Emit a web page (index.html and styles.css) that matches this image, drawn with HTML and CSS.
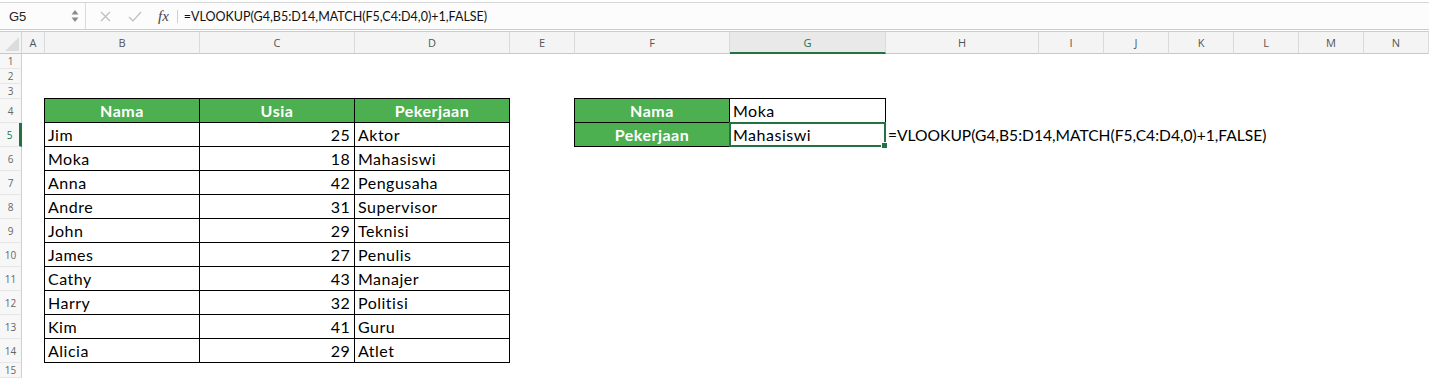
FILE: index.html
```html
<!DOCTYPE html>
<html lang="en">
<head>
    <meta charset="UTF-8">
    <title>VLOOKUP MATCH</title>
    <link rel="stylesheet" href="styles.css">
</head>
<body>
    <div class="topbar">
        <div class="name-box">
            <span>G5</span>
            <svg class="spin" width="8" height="16" viewBox="0 0 8 16">
                <path d="M4 2 L7.5 6.5 L0.5 6.5 Z" fill="#8a8a8a"/>
                <path d="M4 14 L7.5 9.5 L0.5 9.5 Z" fill="#8a8a8a"/>
            </svg>
        </div>
        <div class="fx-tools">
            <svg width="11" height="11" viewBox="0 0 11 11">
                <path d="M1 1 L10 10 M10 1 L1 10" stroke="#bdbdbd" stroke-width="1.2" fill="none"/>
            </svg>
            <svg width="14" height="11" viewBox="0 0 14 11">
                <path d="M1 6 L5 10 L13 1" stroke="#bdbdbd" stroke-width="1.2" fill="none"/>
            </svg>
            <span class="fx">fx</span>
            <span class="divider"></span>
        </div>
        <div class="formula">=VLOOKUP(G4,B5:D14,MATCH(F5,C4:D4,0)+1,FALSE)</div>
    </div>

    <div class="sheet">
        <div class="corner"></div>
        <div class="col-hd">A</div>
        <div class="col-hd">B</div>
        <div class="col-hd">C</div>
        <div class="col-hd">D</div>
        <div class="col-hd">E</div>
        <div class="col-hd">F</div>
        <div class="col-hd active">G</div>
        <div class="col-hd">H</div>
        <div class="col-hd">I</div>
        <div class="col-hd">J</div>
        <div class="col-hd">K</div>
        <div class="col-hd">L</div>
        <div class="col-hd">M</div>
        <div class="col-hd">N</div>

        <div class="row-hd">1</div>
        <div class="row-hd">2</div>
        <div class="row-hd">3</div>
        <div class="row-hd">4</div>
        <div class="row-hd active">5</div>
        <div class="row-hd">6</div>
        <div class="row-hd">7</div>
        <div class="row-hd">8</div>
        <div class="row-hd">9</div>
        <div class="row-hd">10</div>
        <div class="row-hd">11</div>
        <div class="row-hd">12</div>
        <div class="row-hd">13</div>
        <div class="row-hd">14</div>
        <div class="row-hd">15</div>

        <div class="tbl tbl-data">
            <div class="hd">Nama</div><div class="hd">Usia</div><div class="hd">Pekerjaan</div>
            <div>Jim</div><div class="num">25</div><div>Aktor</div>
            <div>Moka</div><div class="num">18</div><div>Mahasiswi</div>
            <div>Anna</div><div class="num">42</div><div>Pengusaha</div>
            <div>Andre</div><div class="num">31</div><div>Supervisor</div>
            <div>John</div><div class="num">29</div><div>Teknisi</div>
            <div>James</div><div class="num">27</div><div>Penulis</div>
            <div>Cathy</div><div class="num">43</div><div>Manajer</div>
            <div>Harry</div><div class="num">32</div><div>Politisi</div>
            <div>Kim</div><div class="num">41</div><div>Guru</div>
            <div>Alicia</div><div class="num">29</div><div>Atlet</div>
        </div>

        <div class="tbl tbl-lookup">
            <div class="hd">Nama</div><div>Moka</div>
            <div class="hd">Pekerjaan</div><div class="selected">Mahasiswi</div>
        </div>

        <div class="overflow">=VLOOKUP(G4,B5:D14,MATCH(F5,C4:D4,0)+1,FALSE)</div>
    </div>
</body>
</html>
```

FILE: styles.css
```css
body {
    margin: 0;
    background: #fff;
    font-family: Lato, sans-serif;
    overflow: hidden;
}

/* formula bar */
.topbar {
    margin-top: 2px;
    height: 26px;
    border-top: 1px solid #d6d6d6;
    border-bottom: 1px solid #cdcdcd;
    background: #fcfcfc;
    display: flex;
    align-items: center;
}

.name-box {
    width: 86px;
    height: 100%;
    border-right: 1px solid #dadada;
    display: flex;
    align-items: center;
    justify-content: space-between;
    padding: 0 6px 0 9px;
    box-sizing: border-box;
    font-family: "Liberation Sans", Arial, sans-serif;
    font-size: 13px;
    color: #222;
}

.fx-tools {
    display: flex;
    align-items: center;
    padding-left: 14px;
    gap: 17px;
}

.fx {
    font-family: "Liberation Serif", serif;
    font-style: italic;
    font-size: 15px;
    color: #444;
    margin-left: -1px;
}

.divider {
    width: 1px;
    height: 13px;
    background: #d0d0d0;
    margin-left: -9px;
}

.formula {
    margin-left: 6px;
    font-size: 12.5px;
    color: #111;
}

/* sheet */
.sheet {
    margin-top: 1px;
    border-top: 1px solid #cdcdcd;
    display: grid;
    grid-template-columns: 22px 23px 155px 155px 155px 65px 155px 156px 153px 65px 65px 65px 65px 65px 65px;
    grid-template-rows: 22px 15px 15px 15px repeat(11, 24px) 15px;
}

.corner {
    background: #f4f4f4;
    border-right: 1px solid #d4d4d4;
    border-bottom: 1px solid #c8c8c8;
    position: relative;
}

.corner::after {
    content: "";
    position: absolute;
    right: 2px;
    bottom: 2px;
    border-left: 14px solid transparent;
    border-bottom: 14px solid #dcdcdc;
}

.col-hd {
    background: #f4f4f4;
    border-right: 1px solid #dadada;
    border-bottom: 1px solid #c8c8c8;
    display: flex;
    align-items: center;
    justify-content: center;
    font-family: "Open Sans", sans-serif;
    font-size: 11px;
    color: #555;
}

.col-hd.active {
    background: #e9e9e9;
    border-bottom: 2px solid #217346;
    color: #217346;
}

.row-hd {
    grid-column: 1;
    background: #f7f7f7;
    border-right: 1px solid #cfcfcf;
    border-bottom: 1px solid #e6e6e6;
    display: flex;
    align-items: center;
    justify-content: center;
    font-family: "Open Sans", sans-serif;
    font-size: 10px;
    color: #666;
}

.row-hd.active {
    border-right: 3px solid #217346;
    color: #217346;
}

/* data tables */
.tbl {
    display: grid;
    gap: 1px;
    background: #000;
    border: 1px solid #000;
    margin: -1px 0 0 -1px;
    grid-auto-rows: 23px;
    font-size: 16px;
    letter-spacing: 0.5px;
    color: #000;
}

.tbl > div {
    background: #fff;
    display: flex;
    align-items: center;
    padding: 0 3px;
    white-space: nowrap;
}

.tbl .hd {
    background: #4caf50;
    color: #fff;
    font-weight: bold;
    justify-content: center;
}

.tbl .num {
    justify-content: flex-end;
    padding-right: 4px;
    letter-spacing: 0.3px;
}

.tbl-data {
    grid-column: 3 / 6;
    grid-row: 5 / 16;
    grid-template-columns: 154px 154px 154px;
}

.tbl-lookup {
    grid-column: 7 / 9;
    grid-row: 5 / 7;
    grid-template-columns: 154px 155px;
}

.tbl .selected {
    position: relative;
    overflow: visible;
}

.tbl .selected::after {
    content: "";
    position: absolute;
    top: -1px;
    left: -1px;
    right: -1px;
    bottom: -1px;
    border: 2px solid #217346;
}

.tbl .selected::before {
    content: "";
    position: absolute;
    right: -3px;
    bottom: -3px;
    width: 5px;
    height: 5px;
    background: #217346;
    border: 1px solid #fff;
    z-index: 1;
}

.overflow {
    grid-column: 9 / 16;
    grid-row: 6;
    display: flex;
    align-items: center;
    padding: 0 0 0 2px;
    font-size: 15.6px;
    white-space: nowrap;
}
```
